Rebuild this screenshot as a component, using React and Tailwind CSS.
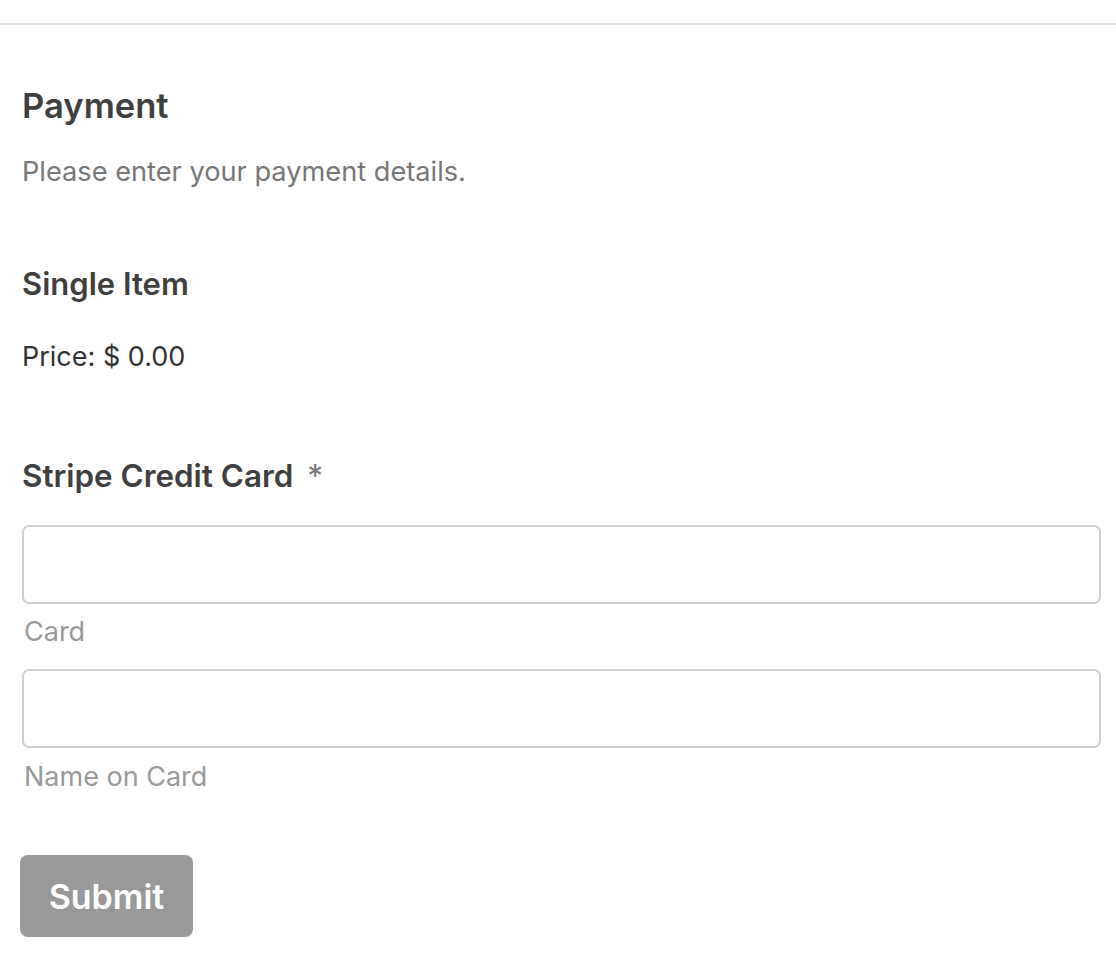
export default function App() {
  return (
    <div className="min-h-screen bg-white text-[#404040]" style={{ fontFamily: 'Inter, "Noto Sans", sans-serif' }}>
      <div className="h-[23px]" />
      <div className="border-t-2 border-[#e0e0e0]" />

      <div className="pl-[22px] pr-[15px]">
        <h2 className="mt-[60px] text-[34.6px] leading-[40px] font-semibold text-[#3f3f3f]">Payment</h2>
        <p className="mt-[31px] text-[27.2px] leading-[32px] text-[#777]">Please enter your payment details.</p>

        <h3 className="mt-[78px] text-[31px] leading-[36px] font-semibold text-[#3f3f3f]">Single Item</h3>
        <p className="mt-[39px] text-[27px] leading-[32px] text-[#333]">Price: $ 0.00</p>

        <div className="mt-[85px] text-[31.4px] leading-[36px] font-semibold text-[#3f3f3f]">
          Stripe Credit Card <span className="ml-[6px] font-normal text-[#777]">*</span>
        </div>

        <div className="mt-[31px] h-[79px] w-full rounded-[7px] border-2 border-[#cfcfcf] bg-white" />
        <div className="mt-[12px] ml-[2px] text-[27px] leading-[32px] text-[#999]">Card</div>

        <div className="mt-[21px] h-[79px] w-full rounded-[7px] border-2 border-[#cfcfcf] bg-white" />
        <div className="mt-[13px] ml-[2px] text-[27px] leading-[32px] text-[#999]">Name on Card</div>

        <button className="mt-[62px] -ml-[2px] flex h-[82px] w-[173px] items-center justify-center rounded-[8px] bg-[#999] text-[34px] font-semibold text-white">
          Submit
        </button>
      </div>
    </div>
  );
}
